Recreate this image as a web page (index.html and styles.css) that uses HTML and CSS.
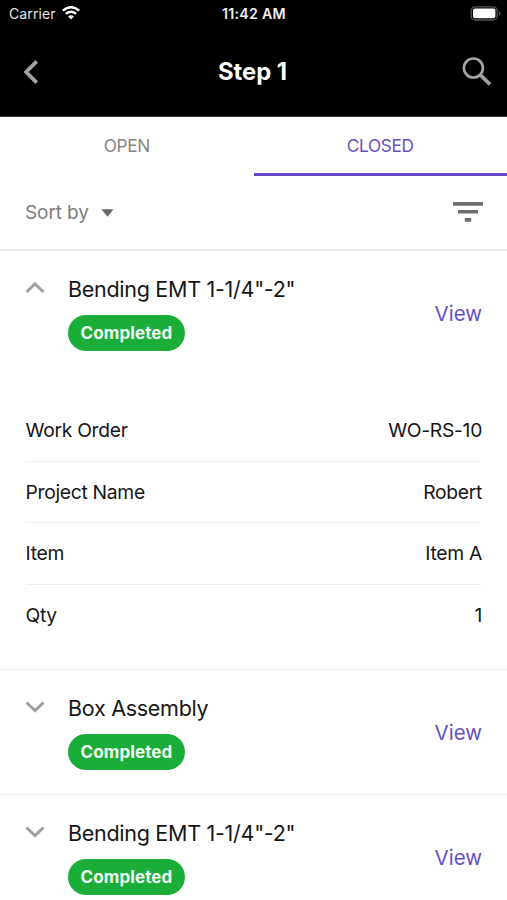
FILE: index.html
```html
<!DOCTYPE html>
<html lang="en">
<head>
<meta charset="utf-8">
<title>Step 1</title>
<link rel="stylesheet" href="styles.css">
</head>
<body>
<header class="header">
  <div class="status">
    <div class="carrier"><span>Carrier</span>
      <svg class="wifi" width="18" height="14" viewBox="0 0 18 14" fill="none" stroke="#fff" stroke-width="2.5"><path d="M.8 4.6Q9-2.2 17.2 4.6M3.8 7.9Q9 3.6 14.2 7.9"/><path d="M6 10.6Q9 8 12 10.6L9 13.6Z" fill="#fff" stroke="none"/></svg>
    </div>
    <span class="time">11:42 AM</span>
    <svg class="battery" width="31" height="15" viewBox="0 0 31 15"><rect x="1.2" y=".8" width="26" height="13.2" rx="4" fill="none" stroke="#555" stroke-width="1.3"/><rect x="3" y="2.6" width="22.4" height="9.6" rx="2" fill="#fff"/><path d="M29 5.2Q30.6 6 30.6 7.4T29 9.6Z" fill="#555"/></svg>
  </div>
  <div class="navbar">
    <svg class="back" width="16" height="24" viewBox="0 0 16 24" fill="none" stroke="#a3a3a3" stroke-width="3.8"><path d="M13.7 1.3 3.2 12l10.5 10.7"/></svg>
    <h1 class="title">Step 1</h1>
    <svg class="search" width="30" height="30" viewBox="0 0 30 30" fill="none" stroke="#a3a3a3" stroke-width="2.7"><circle cx="11.4" cy="11" r="9.5"/><path d="M18.2 17.8l9.8 9.6" stroke-width="3.6"/></svg>
  </div>
</header>
<nav class="tabs">
  <div class="tab">OPEN</div>
  <div class="tab tab-active">CLOSED</div>
</nav>
<div class="sortbar">
  <div class="sort"><span>Sort by</span><svg class="caret" width="13" height="8" viewBox="0 0 13 8"><path d="M.5.3h12L6.5 7.8Z" fill="#666"/></svg></div>
  <svg width="30" height="20" viewBox="0 0 30 20" fill="#6f6f6f"><path d="M0 0h30v3.8H0zM5 8h20v3.6H5zM11.8 16h6.4v3.7h-6.4z"/></svg>
</div>
<main>
  <section class="item item-open">
    <div class="summary">
      <svg class="chevron" width="20" height="12" viewBox="0 0 20 12"><path d="M1.5 10 10 1.9l8.5 8.1"/></svg>
      <div class="info"><h2 class="name">Bending EMT 1-1/4"-2"</h2><span class="badge">Completed</span></div>
      <a class="view">View</a>
    </div>
    <dl class="details">
      <div class="row"><dt>Work Order</dt><dd>WO-RS-10</dd></div>
      <div class="row"><dt>Project Name</dt><dd>Robert</dd></div>
      <div class="row"><dt>Item</dt><dd>Item A</dd></div>
      <div class="row"><dt>Qty</dt><dd>1</dd></div>
    </dl>
  </section>
  <section class="item">
    <div class="summary">
      <svg class="chevron" width="20" height="12" viewBox="0 0 20 12"><path d="M1.5 1.5 10 9.6l8.5-8.1"/></svg>
      <div class="info"><h2 class="name">Box Assembly</h2><span class="badge">Completed</span></div>
      <a class="view">View</a>
    </div>
  </section>
  <section class="item">
    <div class="summary">
      <svg class="chevron" width="20" height="12" viewBox="0 0 20 12"><path d="M1.5 1.5 10 9.6l8.5-8.1"/></svg>
      <div class="info"><h2 class="name">Bending EMT 1-1/4"-2"</h2><span class="badge">Completed</span></div>
      <a class="view">View</a>
    </div>
  </section>
</main>
</body>
</html>
```

FILE: styles.css
```css
* { box-sizing: border-box; margin: 0; padding: 0; }
html, body { height: 900px; overflow: hidden; }
body { width: 507px; background: #fff; color: #161616; font-family: Inter, "Liberation Sans", sans-serif; }
svg { display: block; flex: none; }

.header { height: 117px; background: #000; color: #fff; border-bottom: 1px solid #333; }
.status { display: grid; grid-template-columns: 1fr auto 1fr; align-items: center; height: 27px; padding: 0 6px 0 9px; font-size: 14px; }
.carrier { display: flex; align-items: center; gap: 6px; color: #e2e2e2; letter-spacing: .1px; }
.wifi { margin-top: -2px; }
.time { font-weight: 600; color: #eee; font-size: 14.2px; letter-spacing: .25px; margin-right: 2px; }
.battery { justify-self: end; margin-top: -1px; }
.navbar { display: flex; align-items: center; justify-content: space-between; height: 89px; padding: 0 15px 0 23px; }
.title { margin-left: 4px; font-size: 23.8px; font-weight: 700; line-height: 30px; }

.tabs { display: flex; height: 59px; }
.tab { flex: 1; border-bottom: 3px solid transparent; color: #858585; font-size: 17.2px; letter-spacing: -.3px; line-height: 57px; text-align: center; }
.tab-active { color: #6750c0; border-bottom-color: #6248c4; }

.sortbar { display: flex; align-items: center; justify-content: space-between; height: 75px; padding: 0 24px 2px 25px; border-bottom: 2px solid #ebebeb; color: #7d7d7d; font-size: 19px; letter-spacing: -.1px; }
.sort { display: flex; align-items: center; gap: 12px; padding-top: 2px; }
.caret { margin-top: 1px; }

.item { height: 125px; border-bottom: 1px solid #ebebeb; }
.item-open { height: 419px; }
.summary { display: flex; align-items: center; height: 125px; padding: 0 25px 0 25px; }
.chevron { align-self: flex-start; margin: 31px 23px 0 0; fill: none; stroke: #a0a0a0; stroke-width: 3; }
.info { flex: 1; align-self: flex-start; padding-top: 24px; }
.name { font-size: 21.5px; font-weight: 400; letter-spacing: -.28px; line-height: 28px; white-space: nowrap; }
.badge { display: block; width: 117px; height: 36px; margin-top: 12px; border-radius: 18px; background: #1aae39; color: #f4fff6; font-size: 17px; font-weight: 700; letter-spacing: .1px; line-height: 36px; text-align: center; }
.view { color: #6750c0; font-size: 20.5px; }

.details { margin: 24px 25px 0 25.5px; }
.row { display: flex; align-items: center; justify-content: space-between; height: 61.5px; border-bottom: 1px solid #ededed; font-size: 19.3px; letter-spacing: -.3px; }
.row:last-child { border-bottom: 0; }
```
